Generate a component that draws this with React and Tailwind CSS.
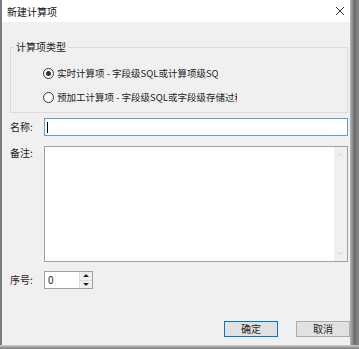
import { ChevronDown, ChevronUp } from 'lucide-react';

const font = { fontFamily: '"Noto Sans CJK SC", "Noto Sans", sans-serif' };

const Radio = ({ checked, label, width }) => (
  <div className="flex items-center h-[12px]">
    <span className="w-[11px] h-[11px] rounded-full border border-[#333] bg-white flex items-center justify-center">
      {checked && <span className="w-[5px] h-[5px] rounded-full bg-[#333]" />}
    </span>
    <span className={`ml-[3px] overflow-hidden whitespace-nowrap text-[9.5px] leading-[12px] text-[#222] ${width}`}>
      {label}
    </span>
  </div>
);

export default function App() {
  return (
    <div className="w-[359px] h-[349px] flex flex-col bg-[#8a8a8a] overflow-hidden" style={font}>
      <div className="flex h-[345px]">
        <div className="w-[2px] bg-[#7b7b7b]" />
        <div className="w-[348px] flex flex-col bg-[#f0f0f0]">
          <div className="h-[22px] bg-white flex items-center justify-between pl-[5px] pr-[4px]">
            <span className="text-[10px] leading-[12px] text-[#111] mt-[2px]">新建计算项</span>
            <svg width="10" height="10" viewBox="0 0 10 10" className="mr-[1px]">
              <path d="M1 1 L9 9 M9 1 L1 9" stroke="#333" strokeWidth="1" />
            </svg>
          </div>

          <fieldset className="ml-[8px] mt-[19px] w-[338px] h-[72px] border border-[#dcdcdc] pl-[3px] pt-[14px]">
            <legend className="px-[2px] text-[10px] leading-[12px] text-[#222]">计算项类型</legend>
            <div className="flex flex-col gap-[12px] ml-[29px]">
              <Radio checked label="实时计算项 - 字段级SQL或计算项级SQL" width="w-[161px]" />
              <Radio label="预加工计算项 - 字段级SQL或字段级存储过程" width="w-[180px]" />
            </div>
          </fieldset>

          <div className="flex items-center mt-[5px]">
            <span className="w-[42px] pl-[8px] text-[10px] leading-[12px] text-[#222]">名称:</span>
            <div className="w-[304px] h-[18px] border border-[#5b9fd9] bg-white flex items-center pl-[2px]">
              <span className="w-[1px] h-[11px] bg-black" />
            </div>
          </div>

          <div className="flex mt-[10px]">
            <span className="w-[42px] pl-[8px] pt-[1px] text-[10px] leading-[12px] text-[#222]">备注:</span>
            <div className="w-[304px] h-[116px] border border-[#a0a0a0] bg-white flex justify-end">
              <div className="w-[13px] bg-[#f0f0f0] flex flex-col items-center justify-between py-[3px]">
                <ChevronUp size={9} color="#c2c2c2" strokeWidth={2} />
                <ChevronDown size={9} color="#c2c2c2" strokeWidth={2} />
              </div>
            </div>
          </div>

          <div className="flex items-center mt-[9px]">
            <span className="w-[42px] pl-[8px] text-[10px] leading-[12px] text-[#222]">序号:</span>
            <div className="flex h-[18px] border border-[#a0a0a0] bg-white">
              <div className="w-[34px] pl-[3px] text-[10px] leading-[16px] text-[#222]">0</div>
              <div className="w-[13px] flex flex-col bg-[#f0f0f0] border-l border-[#dcdcdc]">
                <div className="flex-1 flex items-center justify-center border-b border-[#dcdcdc]">
                  <span className="w-0 h-0 border-l-[3px] border-r-[3px] border-b-[3px] border-l-transparent border-r-transparent border-b-[#222]" />
                </div>
                <div className="flex-1 flex items-center justify-center">
                  <span className="w-0 h-0 border-l-[3px] border-r-[3px] border-t-[3px] border-l-transparent border-r-transparent border-t-[#222]" />
                </div>
              </div>
            </div>
          </div>

          <div className="flex justify-end gap-[18px] mt-[32px]">
            <button className="w-[54px] h-[16px] bg-[#e1e1e1] border border-[#0078d7] text-[10px] leading-[12px] text-[#222]">确定</button>
            <button className="w-[54px] h-[16px] bg-[#e1e1e1] border border-[#adadad] text-[10px] leading-[12px] text-[#222]">取消</button>
          </div>
        </div>
        <div className="flex-1 bg-gradient-to-r from-[#b4b4b4] via-[#6e6e6e] to-[#8a8a8a]" />
      </div>
      <div className="flex-1 bg-gradient-to-b from-[#cfcfcf] to-[#7a7a7a]" />
    </div>
  );
}
